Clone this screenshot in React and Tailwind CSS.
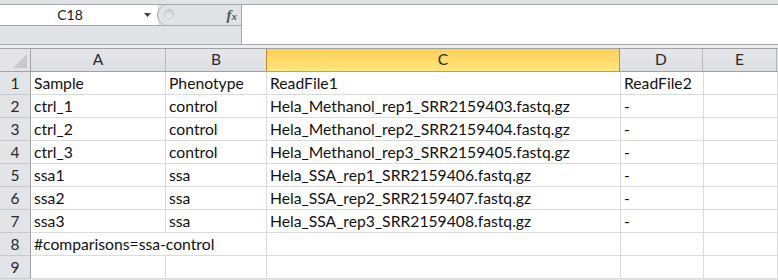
import React from "react";

const cols = [
  { key: "A", w: "w-[135px]" },
  { key: "B", w: "w-[101px]" },
  { key: "C", w: "w-[354px]" },
  { key: "D", w: "w-[83px]" },
  { key: "E", w: "w-[74px]" },
];

const rows = [
  ["Sample", "Phenotype", "ReadFile1", "ReadFile2", ""],
  ["ctrl_1", "control", "Hela_Methanol_rep1_SRR2159403.fastq.gz", "-", ""],
  ["ctrl_2", "control", "Hela_Methanol_rep2_SRR2159404.fastq.gz", "-", ""],
  ["ctrl_3", "control", "Hela_Methanol_rep3_SRR2159405.fastq.gz", "-", ""],
  ["ssa1", "ssa", "Hela_SSA_rep1_SRR2159406.fastq.gz", "-", ""],
  ["ssa2", "ssa", "Hela_SSA_rep2_SRR2159407.fastq.gz", "-", ""],
  ["ssa3", "ssa", "Hela_SSA_rep3_SRR2159408.fastq.gz", "-", ""],
  ["#comparisons=ssa-control", "", "", "", ""],
  ["", "", "", "", ""],
];

function FormulaBar() {
  return (
    <>
      <div className="h-[4px]" />
      <div className="flex h-[41px] border-y border-[#a4a7ac]">
        <div className="w-[242px] flex flex-col border-r border-[#a4a7ac]">
          <div className="h-[21px] flex border-b border-[#a4a7ac]">
            <div className="flex-1 bg-white flex items-center relative">
              <span className="w-[140px] text-center text-[14px] text-[#1a1a1a] leading-none">C18</span>
              <svg className="absolute left-[144px] top-[8px]" width="7" height="4" viewBox="0 0 7 4">
                <path d="M0 0 H7 L3.5 4 Z" fill="#444" />
              </svg>
            </div>
            <div className="w-[84px] relative bg-[#dfe2e6] rounded-l-[10px] border-l border-[#9a9da3] -ml-[1px] flex items-center justify-end pr-[4px]">
              <div className="absolute left-[6px] top-[4px] w-[10px] h-[10px] rounded-full bg-gradient-to-b from-[#c8cbd0] to-[#f4f5f6] border border-[#c2c5ca]" />
              <span className="text-[15px] italic font-bold text-[#555] leading-none" style={{ fontFamily: "'Liberation Serif', serif" }}>
                f<span className="text-[11px]">x</span>
              </span>
            </div>
          </div>
          <div className="flex-1" />
        </div>
        <div className="flex-1 bg-white" />
      </div>
      <div className="h-[3px] bg-[#eceef1]" />
    </>
  );
}

function HeaderRow() {
  return (
    <div className="flex h-[24px] border-y border-[#9fa2a7]">
      <div className="w-[31px] h-full border-r border-[#9fa2a7] bg-[#e2e4e8] relative">
        <svg className="absolute right-[3px] bottom-[3px]" width="14" height="14" viewBox="0 0 14 14">
          <path d="M14 0 V14 H0 Z" fill="#c5c8cd" />
        </svg>
      </div>
      {cols.map((c) =>
        c.key === "C" ? (
          <div
            key={c.key}
            className={`${c.w} h-full flex items-center justify-center border-r border-[#c9893a] bg-gradient-to-b from-[#fcd05a] to-[#fee67c] text-[15.5px] text-[#2a2a2a] -ml-[1px] border-l`}
          >
            {c.key}
          </div>
        ) : (
          <div
            key={c.key}
            className={`${c.w} h-full flex items-center justify-center border-r border-[#b6b9be] bg-gradient-to-b from-[#e4e6ea] to-[#dcdfe3] text-[15.5px] text-[#2a2a2a]`}
          >
            {c.key}
          </div>
        )
      )}
    </div>
  );
}

export default function App() {
  return (
    <div
      className="w-[778px] h-[280px] overflow-hidden bg-[#dfe2e6]"
      style={{ fontFamily: "Lato, 'Liberation Sans', sans-serif" }}
    >
      <FormulaBar />
      <HeaderRow />
      {rows.map((r, i) => (
        <div key={i} className="flex h-[23px]">
          <div className="w-[31px] h-full flex items-center justify-center border-r border-b border-r-[#9fa2a7] border-b-[#c6c9ce] bg-[#e2e4e8] text-[15.5px] text-[#2a2a2a] pt-[1px]">
            {i + 1}
          </div>
          {cols.map((c, j) => {
            const overflow = i === 7 && j === 0;
            return (
              <div
                key={c.key}
                className={`${c.w} h-full bg-white border-b border-[#d9dbde] ${overflow ? "" : "border-r"} ${
                  overflow ? "relative z-10 overflow-visible" : "overflow-hidden"
                } flex items-center pl-[3px] pt-[2px] text-[15.7px] text-[#111] whitespace-nowrap`}
              >
                {r[j]}
              </div>
            );
          })}
        </div>
      ))}
    </div>
  );
}
